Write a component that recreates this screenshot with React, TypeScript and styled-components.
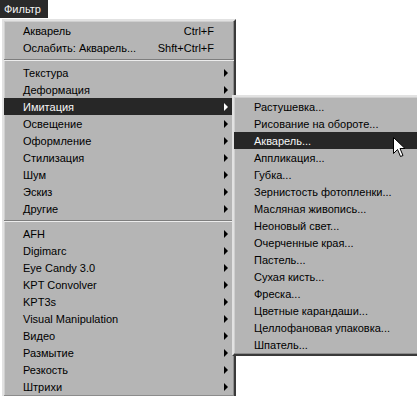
import React from 'react'
import styled, { createGlobalStyle } from 'styled-components'

const GlobalStyle = createGlobalStyle`
  html, body {
    margin: 0;
    padding: 0;
    background: #ffffff;
  }
  body {
    font-family: "Liberation Sans", Arial, sans-serif;
    font-size: 11px;
  }
`

const Desktop = styled.div`
  position: relative;
  width: 417px;
  height: 396px;
  overflow: hidden;
  background: #ffffff;
`

const MenuBar = styled.div`
  display: flex;
  height: 19px;
`

const MenuTitle = styled.div`
  display: flex;
  align-items: center;
  height: 18px;
  padding: 0 7px 0 4px;
  background: #2a2a2a;
  color: #f4f4f4;
`

const Panel = styled.div<{ $left: number; $top: number; $width: number }>`
  position: absolute;
  left: ${p => p.$left}px;
  top: ${p => p.$top}px;
  width: ${p => p.$width}px;
  box-sizing: border-box;
  display: flex;
  flex-direction: column;
  padding: 1px 0;
  background: #b5b5b5;
  border-top: 2px solid #e2e2e2;
  border-left: 2px solid #e2e2e2;
  border-right: 2px solid #3a3a3a;
  border-bottom: 2px solid #3a3a3a;
  box-shadow: inset -1px -1px 0 #8c8c8c, inset 1px 1px 0 #cfcfcf;
`

const Row = styled.div<{ $active?: boolean; $indent: number }>`
  display: flex;
  align-items: center;
  height: 17px;
  padding-left: ${p => p.$indent}px;
  padding-right: 6px;
  background: ${p => (p.$active ? '#272727' : 'transparent')};
  color: ${p => (p.$active ? '#f6f6f6' : '#000000')};
  white-space: nowrap;
`

const Label = styled.span`
  flex: 1;
`

const Shortcut = styled.span`
  margin-right: 14px;
`

const Arrow = styled.span<{ $active?: boolean }>`
  width: 0;
  height: 0;
  border-top: 4px solid transparent;
  border-bottom: 4px solid transparent;
  border-left: 4px solid ${p => (p.$active ? '#ffffff' : '#000000')};
`

const Separator = styled.div`
  height: 0;
  margin: 3px 0;
  border-top: 1px solid #7e7e7e;
  border-bottom: 1px solid #ececec;
`

const Pointer = styled.svg`
  position: absolute;
  left: 393px;
  top: 137px;
`

type Item = { label: string; shortcut?: string; sub?: boolean; active?: boolean } | 'sep'

const mainItems: Item[] = [
  { label: 'Акварель', shortcut: 'Ctrl+F' },
  { label: 'Ослабить: Акварель...', shortcut: 'Shft+Ctrl+F' },
  'sep',
  { label: 'Текстура', sub: true },
  { label: 'Деформация', sub: true },
  { label: 'Имитация', sub: true, active: true },
  { label: 'Освещение', sub: true },
  { label: 'Оформление', sub: true },
  { label: 'Стилизация', sub: true },
  { label: 'Шум', sub: true },
  { label: 'Эскиз', sub: true },
  { label: 'Другие', sub: true },
  'sep',
  { label: 'AFH', sub: true },
  { label: 'Digimarc', sub: true },
  { label: 'Eye Candy 3.0', sub: true },
  { label: 'KPT Convolver', sub: true },
  { label: 'KPT3s', sub: true },
  { label: 'Visual Manipulation', sub: true },
  { label: 'Видео', sub: true },
  { label: 'Размытие', sub: true },
  { label: 'Резкость', sub: true },
  { label: 'Штрихи', sub: true },
]

const subItems: Item[] = [
  { label: 'Растушевка...' },
  { label: 'Рисование на обороте...' },
  { label: 'Акварель...', active: true },
  { label: 'Аппликация...' },
  { label: 'Губка...' },
  { label: 'Зернистость фотопленки...' },
  { label: 'Масляная живопись...' },
  { label: 'Неоновый свет...' },
  { label: 'Очерченные края...' },
  { label: 'Пастель...' },
  { label: 'Сухая кисть...' },
  { label: 'Фреска...' },
  { label: 'Цветные карандаши...' },
  { label: 'Целлофановая упаковка...' },
  { label: 'Шпатель...' },
]

function Menu({ items, indent }: { items: Item[]; indent: number }) {
  return (
    <>
      {items.map((it, i) =>
        it === 'sep' ? (
          <Separator key={i} />
        ) : (
          <Row key={i} $active={it.active} $indent={indent}>
            <Label>{it.label}</Label>
            {it.shortcut && <Shortcut>{it.shortcut}</Shortcut>}
            {it.sub && <Arrow $active={it.active} />}
          </Row>
        )
      )}
    </>
  )
}

export default function App() {
  return (
    <Desktop>
      <GlobalStyle />
      <MenuBar>
        <MenuTitle>Фильтр</MenuTitle>
      </MenuBar>
      <Panel $left={2} $top={19} $width={234}>
        <Menu items={mainItems} indent={19} />
      </Panel>
      <Panel $left={232} $top={95} $width={200}>
        <Menu items={subItems} indent={20} />
      </Panel>
      <Pointer width="13" height="21" viewBox="0 0 13 21">
        <path
          d="M0.5 0.5 L0.5 16.5 L4.5 12.5 L7.5 19.5 L10 18.5 L7 11.5 L12 11.5 Z"
          fill="#ffffff"
          stroke="#000000"
          strokeWidth="1"
        />
      </Pointer>
    </Desktop>
  )
}
